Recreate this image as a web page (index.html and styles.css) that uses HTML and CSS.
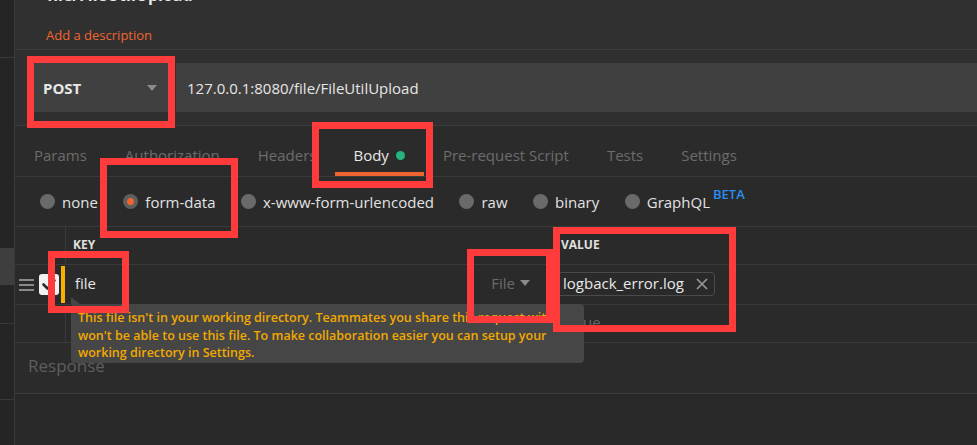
FILE: index.html
```html
<!DOCTYPE html>
<html lang="en">
<head>
<meta charset="utf-8">
<title>Postman request</title>
<link rel="stylesheet" href="styles.css">
</head>
<body>
<div class="app">
  <aside class="sidebar">
    <div class="sb sb-a"></div>
    <div class="sb sb-b"></div>
    <div class="sb sb-active"></div>
    <div class="sb sb-c"></div>
    <div class="sb sb-d"></div>
  </aside>
  <main class="main">
    <header class="req-head">
      <h1 class="req-title">file/FileUtilUpload</h1>
      <div class="req-desc">Add a description</div>
    </header>
    <div class="url-row">
      <div class="method"><span>POST</span><span class="caret"></span></div>
      <div class="url">127.0.0.1:8080/file/FileUtilUpload</div>
    </div>
    <nav class="tabs">
      <span class="tab">Params</span>
      <span class="tab">Authorization</span>
      <span class="tab">Headers</span>
      <span class="tab active">Body<span class="dot"></span></span>
      <span class="tab">Pre-request Script</span>
      <span class="tab">Tests</span>
      <span class="tab">Settings</span>
    </nav>
    <div class="btypes">
      <span class="radio"><span class="rc"></span><span>none</span></span>
      <span class="radio"><span class="rc on"></span><span>form-data</span></span>
      <span class="radio"><span class="rc"></span><span>x-www-form-urlencoded</span></span>
      <span class="radio"><span class="rc"></span><span>raw</span></span>
      <span class="radio"><span class="rc"></span><span>binary</span></span>
      <span class="radio"><span class="rc"></span><span>GraphQL</span><span class="beta">BETA</span></span>
    </div>
    <div class="params">
      <div class="prow head">
        <div class="c0 c0-line"></div>
        <div class="ckey"><span class="th">KEY</span></div>
        <div class="cval"><span class="th">VALUE</span></div>
      </div>
      <div class="prow row1">
        <div class="c0">
          <svg class="handle" width="15" height="12" viewBox="0 0 15 12"><rect x="0" y="0" width="15" height="2" fill="#8a8a8a"/><rect x="0" y="5" width="15" height="2" fill="#8a8a8a"/><rect x="0" y="10" width="15" height="2" fill="#8a8a8a"/></svg>
          <span class="check"><svg width="20" height="21" viewBox="0 0 20 21"><path d="M4.5 10.5 L8.5 14.5 L15.5 6.5" fill="none" stroke="#2b2b2b" stroke-width="2.6" stroke-linecap="round" stroke-linejoin="round"/></svg></span>
          <span class="focusbar"></span>
        </div>
        <div class="ckey">
          <span class="keytext">file</span>
          <span class="ftype">File<span class="caret small"></span></span>
          <div class="tip">This file isn't in your working directory. Teammates you share this request with<br>won't be able to use this file. To make collaboration easier you can setup your<br>working directory in Settings.</div>
        </div>
        <div class="cval">
          <span class="chip">logback_error.log<svg class="x" width="12" height="12" viewBox="0 0 12 12"><path d="M1 1 L11 11 M11 1 L1 11" stroke="#9a9a9a" stroke-width="1.6"/></svg></span>
        </div>
      </div>
      <div class="prow row2">
        <div class="c0 c0-line"></div>
        <div class="ckey"></div>
        <div class="cval"><span class="ph">Value</span></div>
      </div>
    </div>
    <div class="response">Response</div>
    <div class="rest"></div>
  </main>
  <div class="marks">
    <span class="mark m-post"></span>
    <span class="mark m-body"></span>
    <span class="mark m-form"></span>
    <span class="mark m-key"></span>
    <span class="mark m-file"></span>
    <span class="mark m-value"></span>
  </div>
</div>
</body>
</html>
```
FILE: styles.css
```css
* { box-sizing: border-box; }
html, body { margin: 0; padding: 0; }
body {
  background: #282828;
  font-family: "Open Sans", "Liberation Sans", sans-serif;
}
.app {
  position: relative;
  display: flex;
  width: 977px;
  height: 445px;
  overflow: hidden;
  background: #2a2a2a;
}
/* sidebar strip */
.sidebar {
  width: 15px;
  flex: none;
  background: #252525;
  border-right: 1px solid #3a3a3a;
  display: flex;
  flex-direction: column;
}
.sb { flex: none; }
.sb-a { height: 58px; border-bottom: 1px solid #3a3a3a; }
.sb-b { height: 190px; }
.sb-active { height: 37px; background: #3e3e3e; }
.sb-c { height: 39px; border-bottom: 1px solid #3a3a3a; }
.sb-d { height: 76px; border-bottom: 1px solid #3a3a3a; }

.main {
  flex: 1;
  min-width: 0;
  display: flex;
  flex-direction: column;
}
/* header */
.req-head {
  flex: none;
  height: 50px;
  padding-left: 31px;
  background: #303030;
  border-bottom: 1px solid #3c3c3c;
}
.req-title {
  margin: -15px 0 0 1px;
  font-size: 16px;
  line-height: 20px;
  font-weight: 700;
  color: #e8e8e8;
}
.req-desc {
  margin-top: 20px;
  font-size: 13px;
  line-height: 20px;
  color: #f0652f;
}
/* url row */
.url-row {
  flex: none;
  height: 76px;
  display: flex;
  align-items: center;
  padding-left: 19px;
  background: #2f2f2f;
  border-bottom: 1px solid #3c3c3c;
}
.method {
  flex: none;
  width: 140px;
  height: 49px;
  display: flex;
  align-items: center;
  justify-content: space-between;
  padding: 0 17px 0 9px;
  margin-right: 2px;
  background: #404040;
  font-size: 15px;
  font-weight: 700;
  color: #e8e8e8;
}
.caret {
  width: 0;
  height: 0;
  border-left: 5px solid transparent;
  border-right: 5px solid transparent;
  border-top: 6px solid #8a8a8a;
}
.url {
  flex: 1;
  height: 49px;
  display: flex;
  align-items: center;
  padding-left: 11px;
  background: #404040;
  font-size: 15px;
  color: #e6e6e6;
}
/* tabs */
.tabs {
  flex: none;
  height: 51px;
  display: flex;
  background: #2b2b2b;
  border-bottom: 1px solid #3a3a3a;
}
.tab {
  display: flex;
  align-items: center;
  padding: 12px 19px 0;
  border-bottom: 4px solid transparent;
  font-size: 15px;
  color: #6c6c6c;
}
.tab.active {
  color: #e8e8e8;
  border-bottom-color: #f0652f;
  padding-left: 18px;
}
.dot {
  width: 9px;
  height: 9px;
  margin-left: 7px;
  border-radius: 50%;
  background: #26b47f;
}
/* body type radios */
.btypes {
  flex: none;
  height: 50px;
  display: flex;
  align-items: stretch;
  gap: 25.5px;
  padding-left: 25px;
  background: #2a2a2a;
  border-bottom: 1px solid #3a3a3a;
}
.radio {
  display: flex;
  align-items: center;
  gap: 7px;
  font-size: 15px;
  color: #e2e2e2;
}
.rc {
  width: 15px;
  height: 15px;
  border-radius: 50%;
  background: #6a6a6a;
  display: flex;
  align-items: center;
  justify-content: center;
}
.rc.on { background: #5e5e5e; }
.rc.on::after {
  content: "";
  width: 7px;
  height: 7px;
  border-radius: 50%;
  background: #f0652f;
}
.beta {
  align-self: flex-start;
  margin: 10px 0 0 -4px;
  font-size: 13px;
  line-height: 14px;
  font-weight: 600;
  color: #2a8cf0;
}
/* params table */
.params { flex: none; background: #2a2a2a; }
.prow {
  display: flex;
  border-bottom: 1px solid #3a3a3a;
}
.prow.head { height: 38px; padding-bottom: 3px; }
.prow.row1 { height: 40px; }
.prow.row2 { height: 38px; }
.c0 {
  flex: none;
  width: 51px;
  display: flex;
  align-items: center;
  padding-left: 4px;
}
.c0-line { border-right: 1px solid #3a3a3a; }
.head .c0-line { margin-bottom: -3px; }
.ckey {
  position: relative;
  flex: none;
  width: 486px;
  display: flex;
  align-items: center;
  padding: 0 22px 0 8px;
}
.head .ckey { padding-left: 7px; }
.cval {
  flex: 1;
  display: flex;
  align-items: center;
  padding-left: 9px;
}
.row1 .cval { padding-left: 5px; }
.th {
  font-size: 12px;
  font-weight: 700;
  color: #e0e0e0;
}
.handle { flex: none; }
.check {
  flex: none;
  width: 20px;
  height: 21px;
  margin-left: 5px;
  border-radius: 3px;
  background: #f2f2f2;
  display: flex;
}
.focusbar {
  flex: none;
  align-self: stretch;
  width: 4px;
  margin: 1px 0 1px 2px;
  background: #f5b000;
}
.keytext {
  flex: 1;
  font-size: 15px;
  color: #e6e6e6;
  padding: 0 0 3px 1px;
}
.ftype {
  display: flex;
  align-items: center;
  gap: 5px;
  font-size: 15px;
  color: #6a6a6a;
  padding-bottom: 3px;
}
.caret.small {
  border-left-width: 5px;
  border-right-width: 5px;
  border-top: 6px solid #8a8a8a;
}
.chip {
  display: flex;
  align-items: center;
  gap: 12px;
  height: 24px;
  margin-bottom: 2px;
  padding: 0 6px 2px 5px;
  border: 1px solid #4a4a4a;
  border-radius: 4px;
  font-size: 15px;
  color: #e8e8e8;
}
.x { flex: none; margin-top: 2px; }
.ph {
  font-size: 15px;
  color: #666666;
  padding: 0 0 3px 1px;
}
/* tooltip over the table */
.tip {
  position: absolute;
  left: 5px;
  top: 39px;
  width: 513px;
  padding: 5px 7px 1px;
  border-radius: 4px;
  background: #464646;
  font-size: 12.5px;
  line-height: 17.5px;
  font-weight: 600;
  color: #f2a900;
  white-space: nowrap;
  z-index: 3;
}
.tip::before {
  content: "";
  position: absolute;
  left: 0;
  top: -7px;
  border-bottom: 7px solid #464646;
  border-right: 9px solid transparent;
}
/* response */
.response {
  flex: none;
  height: 51px;
  display: flex;
  align-items: center;
  padding: 0 0 6px 13px;
  font-size: 17px;
  color: #5e5e5e;
  background: #2b2b2b;
  border-bottom: 1px solid #3a3a3a;
}
.rest { flex: 1; background: #282828; }
/* red annotation boxes */
.marks {
  position: absolute;
  inset: 0;
  pointer-events: none;
  z-index: 10;
}
.mark {
  position: absolute;
  border: 7px solid #ff3b3b;
}
.m-post { left: 27px; top: 56px; width: 148px; height: 72px; }
.m-body { left: 312px; top: 122px; width: 121px; height: 66px; }
.m-form { left: 100px; top: 158px; width: 138px; height: 80px; }
.m-key { left: 48px; top: 251px; width: 81px; height: 62px; }
.m-file { left: 467px; top: 249px; width: 86px; height: 74px; }
.m-value { left: 553px; top: 227px; width: 183px; height: 105px; }
```
